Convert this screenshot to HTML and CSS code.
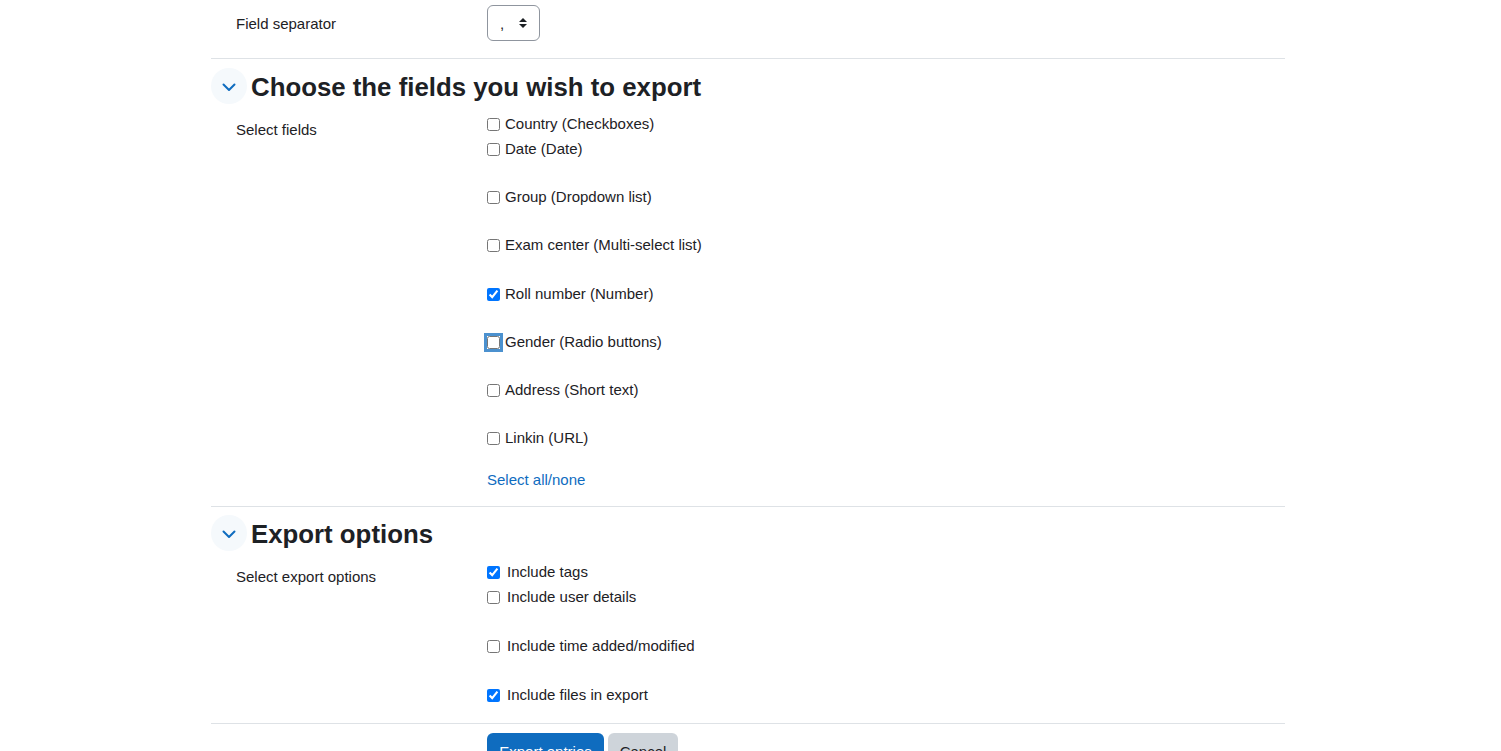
FILE: index.html
```html
<!DOCTYPE html>
<html lang="en">
<head>
<meta charset="utf-8">
<title>Export entries</title>
<link rel="stylesheet" href="styles.css">
</head>
<body>
<form class="page">
  <div class="row row-sep">
    <div class="label sep-label">Field separator</div>
    <div class="controls">
      <div class="select">
        <span class="select-value">,</span>
        <svg class="select-arrows" width="10" height="12" viewBox="0 0 10 12"><path d="M5 1 L9 5 H1 Z M5 11 L9 7 H1 Z" fill="#1d2125"/></svg>
      </div>
    </div>
  </div>

  <section class="section">
    <div class="section-head">
      <span class="toggle"><svg width="14" height="9" viewBox="0 0 14 9"><path d="M1.5 1.5 L7 7 L12.5 1.5" fill="none" stroke="#0f6cbf" stroke-width="2" stroke-linecap="round" stroke-linejoin="round"/></svg></span>
      <h3 class="section-title">Choose the fields you wish to export</h3>
    </div>
    <div class="row">
      <div class="label field-label">Select fields</div>
      <div class="controls checks">
        <label class="check tight"><input type="checkbox"><span>Country (Checkboxes)</span></label>
        <label class="check"><input type="checkbox"><span>Date (Date)</span></label>
        <label class="check"><input type="checkbox"><span>Group (Dropdown list)</span></label>
        <label class="check wide"><input type="checkbox"><span>Exam center (Multi-select list)</span></label>
        <label class="check"><input type="checkbox" checked><span>Roll number (Number)</span></label>
        <label class="check"><input type="checkbox" class="focused"><span>Gender (Radio buttons)</span></label>
        <label class="check"><input type="checkbox"><span>Address (Short text)</span></label>
        <label class="check last"><input type="checkbox"><span>Linkin (URL)</span></label>
        <a class="link" href="#">Select all/none</a>
      </div>
    </div>
  </section>

  <section class="section section-2">
    <div class="section-head">
      <span class="toggle"><svg width="14" height="9" viewBox="0 0 14 9"><path d="M1.5 1.5 L7 7 L12.5 1.5" fill="none" stroke="#0f6cbf" stroke-width="2" stroke-linecap="round" stroke-linejoin="round"/></svg></span>
      <h3 class="section-title">Export options</h3>
    </div>
    <div class="row">
      <div class="label field-label">Select export options</div>
      <div class="controls checks opts">
        <label class="check tight"><input type="checkbox" checked><span>Include tags</span></label>
        <label class="check wide"><input type="checkbox"><span>Include user details</span></label>
        <label class="check wide"><input type="checkbox"><span>Include time added/modified</span></label>
        <label class="check last"><input type="checkbox" checked><span>Include files in export</span></label>
      </div>
    </div>
  </section>

  <div class="buttons">
    <div class="label"></div>
    <div class="controls btn-row">
      <button type="button" class="btn btn-primary">Export entries</button>
      <button type="button" class="btn btn-secondary">Cancel</button>
    </div>
  </div>
</form>
</body>
</html>
```

FILE: styles.css
```css
html, body {
  margin: 0;
  padding: 0;
  background: #fff;
}
body {
  font-family: "Liberation Sans", Arial, sans-serif;
  font-size: 15px;
  color: #1d2125;
  overflow: hidden;
}
.page {
  width: 1074px;
  margin-left: 211px;
}
.row {
  display: flex;
  align-items: flex-start;
}
.label {
  width: 276px;
  padding-left: 25px;
  box-sizing: border-box;
  flex: none;
  line-height: 22px;
}
.controls {
  flex: 1;
}
.row-sep {
  padding-top: 5px;
  padding-bottom: 17px;
  align-items: center;
}
.sep-label {
  position: relative;
  top: 1px;
}
.select {
  width: 53px;
  height: 36px;
  box-sizing: border-box;
  border: 1px solid #8f959e;
  border-radius: 6px;
  display: flex;
  align-items: center;
  padding-left: 12px;
  padding-right: 11px;
  justify-content: space-between;
}
.select-value {
  line-height: 22px;
  position: relative;
  top: 1px;
}
.section {
  border-top: 1px solid #dee2e6;
  padding-top: 9px;
}
.section-2 {
  padding-top: 8px;
}
.section-head {
  display: flex;
  align-items: center;
  height: 36px;
}
.toggle {
  width: 36px;
  height: 36px;
  border-radius: 50%;
  background: #f5f9fc;
  display: flex;
  align-items: center;
  justify-content: center;
  flex: none;
}
.toggle svg {
  position: relative;
  top: 1px;
}
.section-title {
  margin: 0 0 0 4px;
  font-size: 25.8px;
  font-weight: 700;
  line-height: 36px;
  color: #1d2125;
  position: relative;
  top: 1px;
}
.section .row {
  padding-top: 9px;
}
.section-2 .row {
  padding-top: 10px;
}
.field-label {
  padding-top: 6px;
}
.section-2 .field-label {
  padding-top: 5px;
}
.checks {
  display: flex;
  flex-direction: column;
  align-items: flex-start;
  padding-bottom: 15px;
}
.check {
  display: flex;
  align-items: center;
  height: 22px;
  line-height: 22px;
  margin-bottom: 26px;
}
.check.tight {
  margin-bottom: 3px;
}
.check.wide {
  margin-bottom: 27px;
}
.check.last {
  margin-bottom: 20px;
}
.check input {
  margin: 0 5px 0 0;
  width: 13px;
  height: 13px;
}
.opts .check input {
  margin-right: 7px;
}
.opts .check.last {
  margin-bottom: 0;
}
.opts {
  padding-bottom: 17px;
}
.check input.focused {
  box-shadow: 0 0 0 3px rgba(15, 108, 191, 0.75);
  border-radius: 1px;
}
.link {
  color: #0f6cbf;
  text-decoration: none;
  line-height: 22px;
}
.buttons {
  display: flex;
  border-top: 1px solid #dee2e6;
  padding-top: 9px;
}
.btn-row {
  display: flex;
  gap: 4px;
  align-items: flex-start;
}
.btn {
  font-family: inherit;
  font-size: 15px;
  line-height: 22px;
  padding: 7px 0;
  border-radius: 6px;
  border: 1px solid transparent;
  box-sizing: border-box;
  white-space: nowrap;
  text-align: center;
  height: 38px;
}
.btn-primary {
  background: #0f6cbf;
  color: #fff;
  width: 117px;
}
.btn-secondary {
  background: #ced4da;
  color: #1d2125;
  width: 70px;
}
```
